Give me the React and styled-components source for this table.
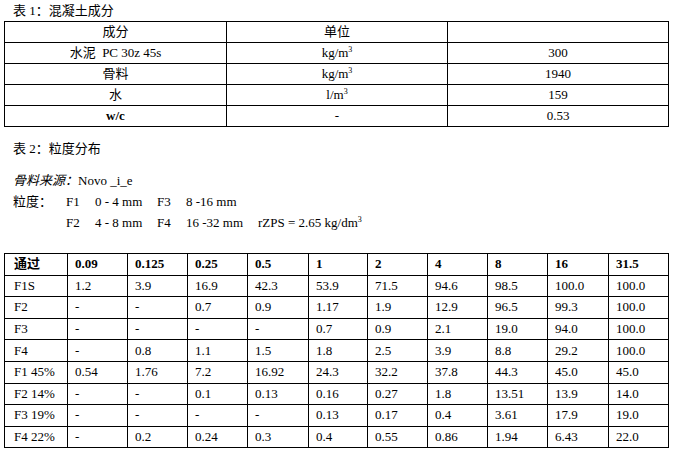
import React from "react";
import styled, { createGlobalStyle } from "styled-components";

const Global = createGlobalStyle`
  html, body { margin: 0; padding: 0; background: #fff; }
  body {
    font-family: "Liberation Serif", "Noto Sans CJK SC", serif;
    font-size: 13px;
    color: #000;
  }
`;

const Page = styled.div`
  width: 675px;
  padding: 0 0 0 4px;
  box-sizing: border-box;
`;

const Caption = styled.div`
  height: 21px;
  line-height: 21px;
  padding-left: 9px;
  margin-top: ${(p) => p.$top || 0}px;
  font-size: 13px;
`;

const Table = styled.table`
  border-collapse: collapse;
  width: 665px;
  table-layout: fixed;
  margin-top: ${(p) => p.$top || 0}px;
`;

const Row = styled.tr`
  height: ${(p) => p.$h}px;
`;

const Cell = styled.td`
  border: 1px solid #000;
  padding: 0 0 0 ${(p) => (p.$center ? 0 : p.$pad || 7)}px;
  text-align: ${(p) => (p.$center ? "center" : "left")};
  font-weight: ${(p) => (p.$bold ? 700 : 400)};
  line-height: 16px;
  white-space: pre;
  vertical-align: middle;
`;

const Sup = styled.sup`
  font-size: 8px;
  vertical-align: 5px;
  line-height: 0;
`;

const Source = styled.div`
  margin-top: 11px;
  padding-left: 9px;
  line-height: 21px;
`;

const Em = styled.span`
  font-style: italic;
`;

const SizeGrid = styled.div`
  display: grid;
  grid-template-columns: 53px 29px 62px 29px 72px auto;
  padding-left: 9px;
  line-height: 21px;
  white-space: pre;
`;

const Spacer = styled.span``;

const t1 = [
  ["水泥  PC 30z 45s", "kg/m", true, "300"],
  ["骨料", "kg/m", true, "1940"],
  ["水", "l/m", true, "159"],
  ["w/c", "-", false, "0.53", true],
];

const header = ["通过", "0.09", "0.125", "0.25", "0.5", "1", "2", "4", "8", "16", "31.5"];
const t2 = [
  ["F1S", "1.2", "3.9", "16.9", "42.3", "53.9", "71.5", "94.6", "98.5", "100.0", "100.0"],
  ["F2", "-", "-", "0.7", "0.9", "1.17", "1.9", "12.9", "96.5", "99.3", "100.0"],
  ["F3", "-", "-", "-", "-", "0.7", "0.9", "2.1", "19.0", "94.0", "100.0"],
  ["F4", "-", "0.8", "1.1", "1.5", "1.8", "2.5", "3.9", "8.8", "29.2", "100.0"],
  ["F1 45%", "0.54", "1.76", "7.2", "16.92", "24.3", "32.2", "37.8", "44.3", "45.0", "45.0"],
  ["F2 14%", "-", "-", "0.1", "0.13", "0.16", "0.27", "1.8", "13.51", "13.9", "14.0"],
  ["F3 19%", "-", "-", "-", "-", "0.13", "0.17", "0.4", "3.61", "17.9", "19.0"],
  ["F4 22%", "-", "0.2", "0.24", "0.3", "0.4", "0.55", "0.86", "1.94", "6.43", "22.0"],
];

const widths = [63, 60, 60, 60, 61, 59, 60, 60, 60, 61, 60];

export default function App() {
  return (
    <Page>
      <Global />
      <Caption>表 1：混凝土成分</Caption>
      <Table>
        <colgroup>
          <col style={{ width: 222 }} />
          <col style={{ width: 221 }} />
          <col style={{ width: 221 }} />
        </colgroup>
        <tbody>
          <Row $h={21}>
            <Cell $center>成分</Cell>
            <Cell $center>单位</Cell>
            <Cell $center></Cell>
          </Row>
          {t1.map(([a, u, sup, v, bold]) => (
            <Row $h={21} key={a}>
              <Cell $center $bold={bold}>{a}</Cell>
              <Cell $center>
                {u}
                {sup && <Sup>3</Sup>}
              </Cell>
              <Cell $center>{v}</Cell>
            </Row>
          ))}
        </tbody>
      </Table>
      <Caption $top={11}>表 2：粒度分布</Caption>
      <Source>
        <Em>骨料来源：</Em>Novo _i_e
      </Source>
      <SizeGrid>
        <span>粒度：</span>
        <span>F1</span>
        <span>0 - 4 mm</span>
        <span>F3</span>
        <span>8 -16 mm</span>
        <Spacer />
        <Spacer />
        <span>F2</span>
        <span>4 - 8 mm</span>
        <span>F4</span>
        <span>16 -32 mm</span>
        <span>
          rZPS = 2.65 kg/dm<Sup>3</Sup>
        </span>
      </SizeGrid>
      <Table $top={20}>
        <colgroup>
          {widths.map((w, i) => (
            <col key={i} style={{ width: w }} />
          ))}
        </colgroup>
        <tbody>
          <Row $h={21.6}>
            {header.map((h, i) => (
              <Cell key={i} $bold $pad={i === 0 ? 9 : 7}>{h}</Cell>
            ))}
          </Row>
          {t2.map((r) => (
            <Row $h={21.6} key={r[0]}>
              {r.map((c, i) => (
                <Cell key={i} $pad={i === 0 ? 9 : 7}>{c}</Cell>
              ))}
            </Row>
          ))}
        </tbody>
      </Table>
    </Page>
  );
}
